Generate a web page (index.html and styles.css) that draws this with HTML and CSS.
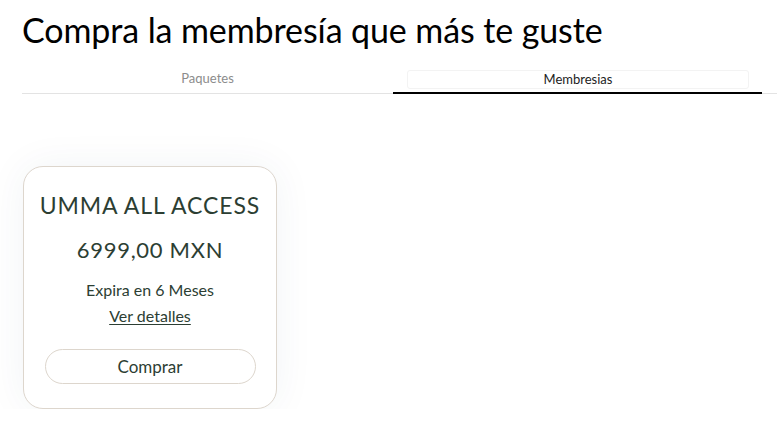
FILE: index.html
```html
<!DOCTYPE html>
<html lang="es">
<head>
<meta charset="utf-8">
<title>Membresías</title>
<link rel="stylesheet" href="styles.css">
</head>
<body>
<main class="page">
  <h1 class="title">Compra la membresía que más te guste</h1>
  <div class="tabs">
    <div class="tab">Paquetes</div>
    <div class="tab tab-active"><span class="tab-pill">Membresias</span></div>
  </div>
  <section class="cards">
    <article class="card">
      <h2 class="card-name">UMMA ALL ACCESS</h2>
      <div class="card-price">6999,00 MXN</div>
      <div class="card-expire">Expira en 6 Meses</div>
      <a class="card-link" href="#">Ver detalles</a>
      <button class="card-btn">Comprar</button>
    </article>
  </section>
</main>
</body>
</html>
```

FILE: styles.css
```css
* { box-sizing: border-box; }
html, body { margin: 0; padding: 0; background: #ffffff; overflow: hidden; }
body { font-family: Lato, "Open Sans", sans-serif; color: #000; }
.page { padding: 10px 0 0 22px; }
.title {
  margin: 0;
  font-size: 34px;
  font-weight: 400;
  line-height: 40px;
  letter-spacing: -0.1px;
  color: #000;
}
.tabs {
  margin-top: 20px;
  display: flex;
  width: 755px;
  border-bottom: 1px solid #e3e3e3;
}
.tab {
  width: 371px;
  height: 23px;
  display: flex;
  align-items: flex-start;
  justify-content: center;
  font-size: 13px;
  color: #8c8c8c;
  line-height: 16px;
}
.tab-active {
  width: 369px;
  color: #222;
  border-bottom: 2px solid #000;
  margin-bottom: -1px;
  height: 24px;
  padding: 0 13px 0 14px;
}
.tab-pill {
  display: block;
  width: 100%;
  height: 19px;
  line-height: 17px;
  text-align: center;
  background: #fff;
  border: 1px solid #f3f3f3;
  border-radius: 3px;
}
.cards { padding-top: 72px; padding-left: 1px; }
.card {
  width: 254px;
  height: 243px;
  background: #fff;
  border: 1px solid #ddd6cd;
  border-radius: 20px;
  box-shadow: 0 0 40px rgba(40, 60, 110, 0.06);
  display: flex;
  flex-direction: column;
  align-items: center;
  padding-top: 23px;
  color: #2c3e33;
}
.card-name {
  margin: 0;
  font-size: 23px;
  font-weight: 400;
  line-height: 30px;
  letter-spacing: 0.9px;
}
.card-price {
  margin-top: 15px;
  font-size: 22px;
  line-height: 30px;
  letter-spacing: 0.7px;
}
.card-expire {
  margin-top: 15px;
  font-size: 16px;
  line-height: 20px;
}
.card-link {
  margin-top: 6px;
  font-size: 16px;
  line-height: 20px;
  color: #2c3e33;
  text-decoration: underline;
  text-underline-offset: 2px;
}
.card-btn {
  margin-top: 23px;
  width: 211px;
  height: 35px;
  border: 1px solid #ddd6cd;
  border-radius: 18px;
  background: #fff;
  font-family: inherit;
  font-size: 17px;
  color: #2c3e33;
}
```
